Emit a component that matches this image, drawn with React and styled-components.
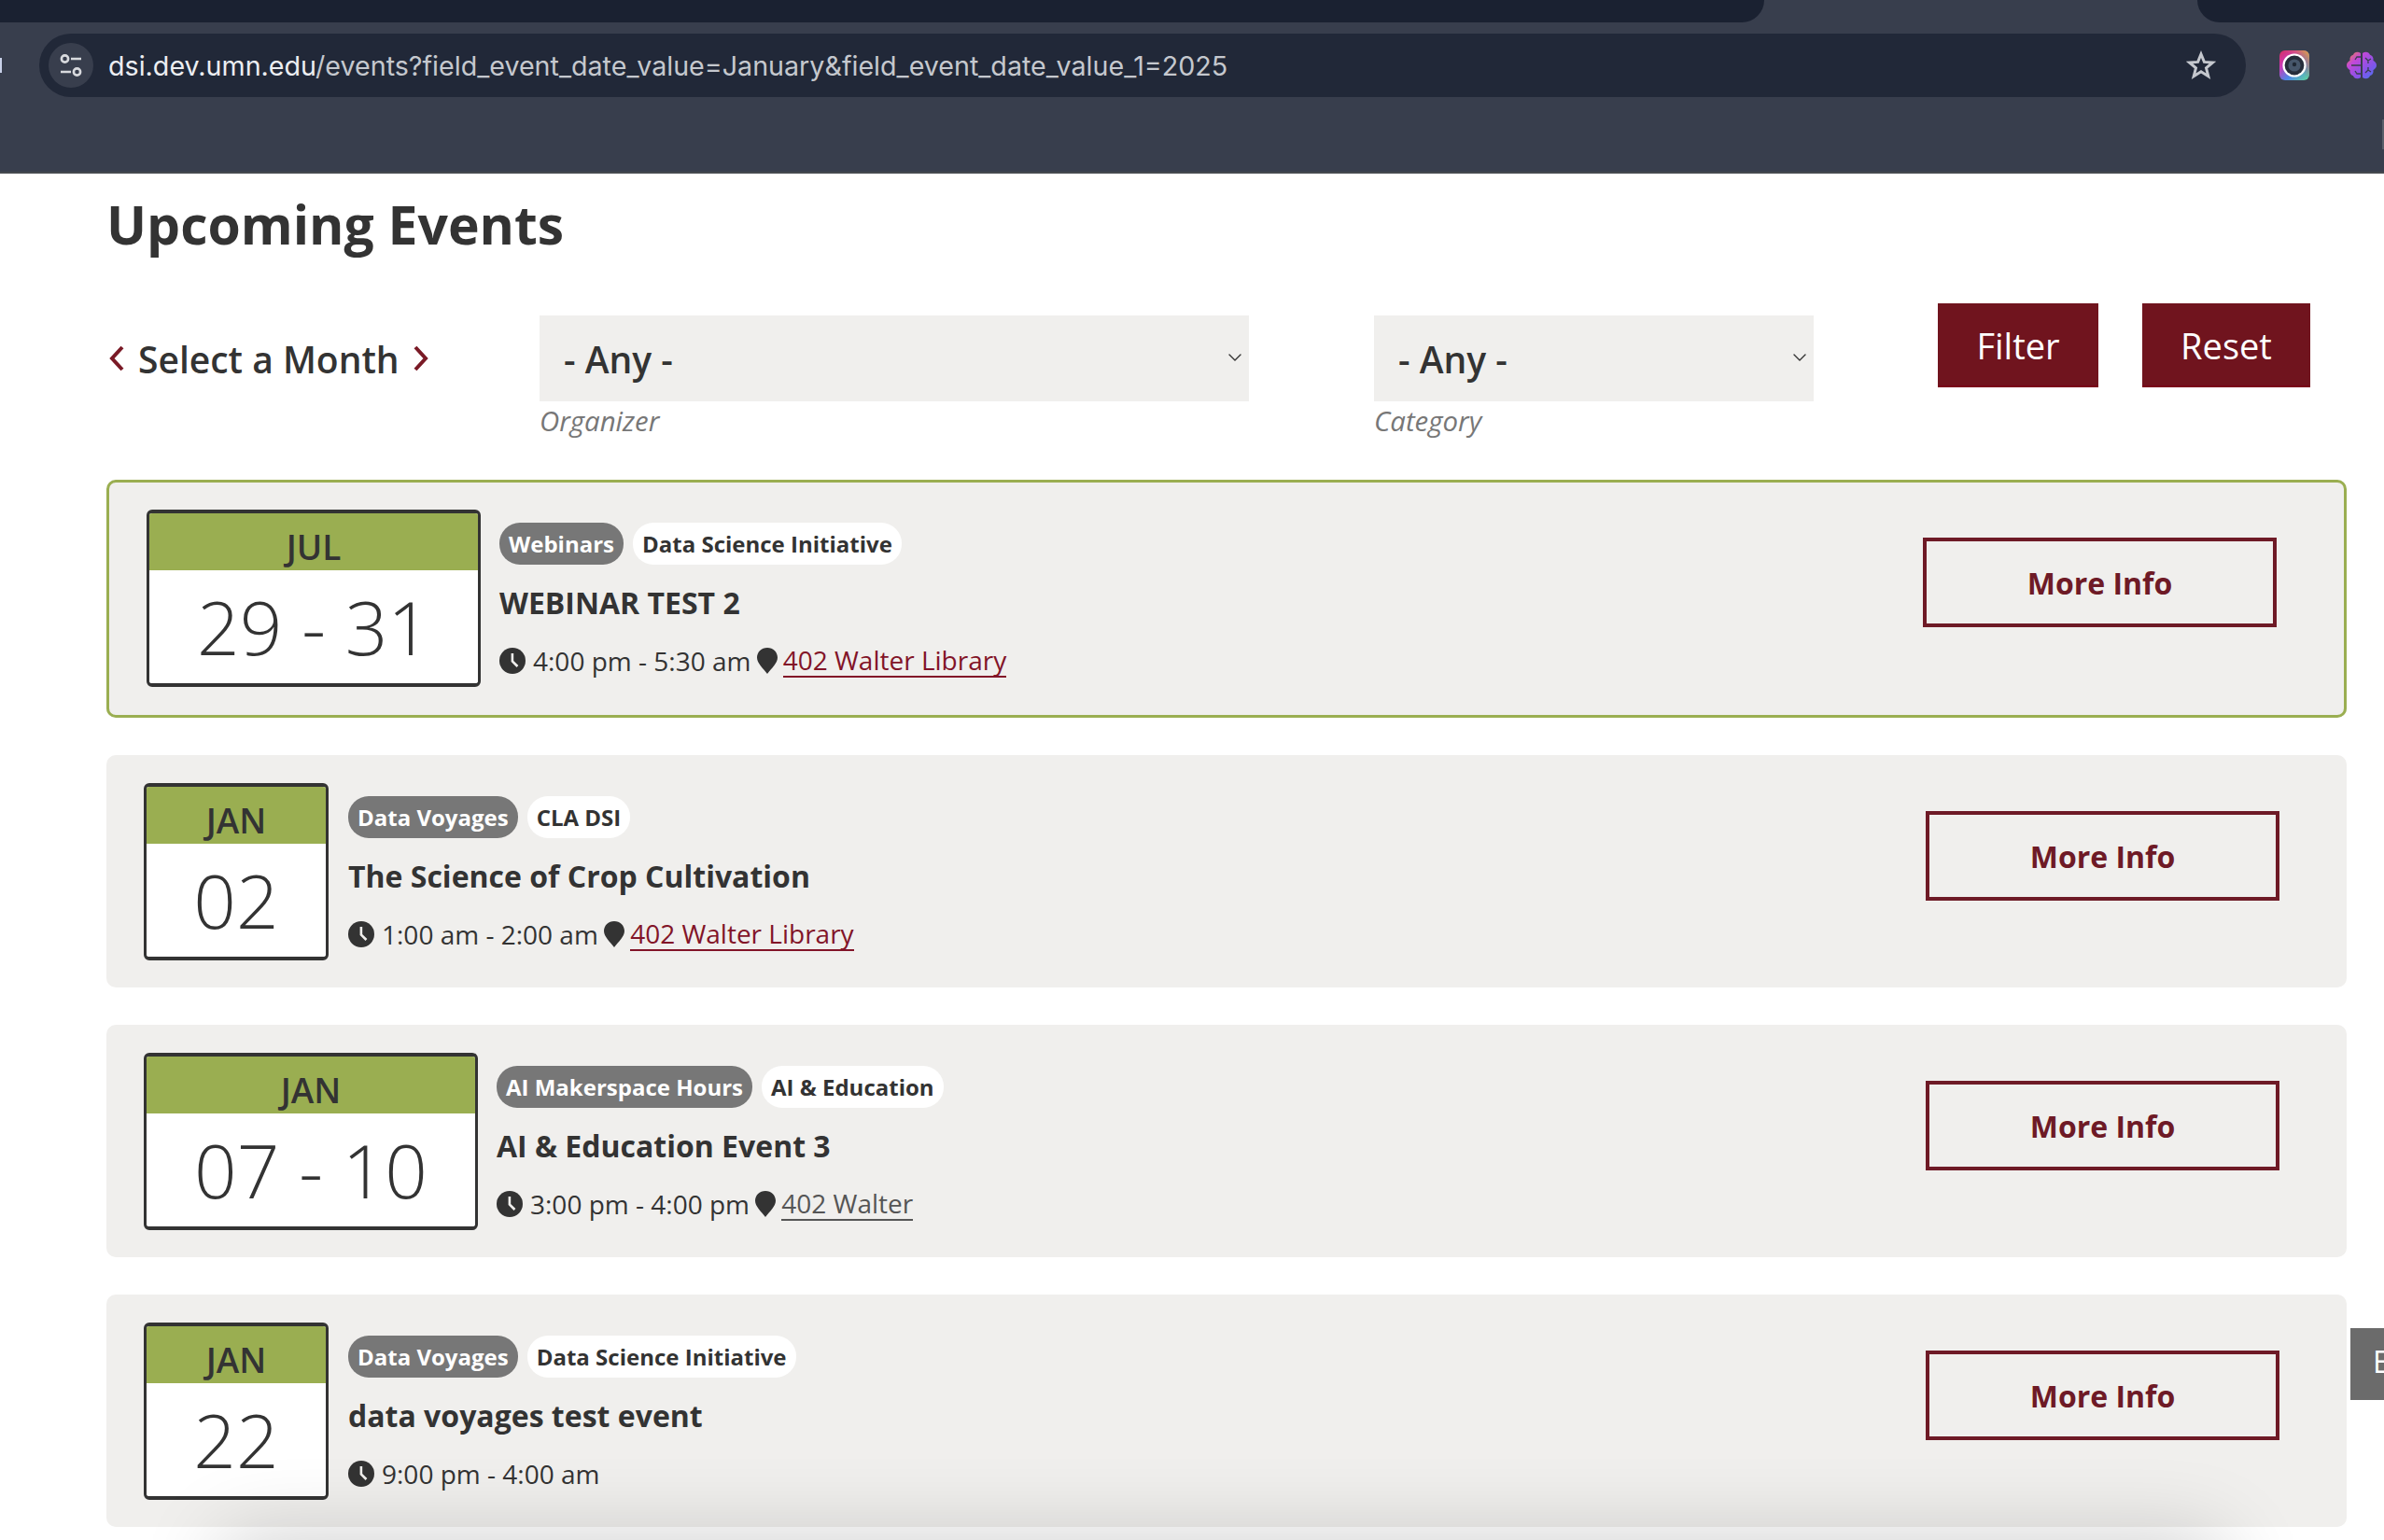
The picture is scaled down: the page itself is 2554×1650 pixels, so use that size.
import React from 'react';
import styled, { createGlobalStyle } from 'styled-components';
import { LuChevronDown } from 'react-icons/lu';

const GlobalStyle = createGlobalStyle`
  html, body {
    margin: 0;
    height: 100%;
    overflow: hidden;
    background: #fff;
  }
  * {
    box-sizing: border-box;
  }
`;

const Page = styled.div`
  position: relative;
  width: 2554px;
  height: 1650px;
  overflow: hidden;
  font-family: "Open Sans", sans-serif;
  color: #333;
`;

/* browser chrome */
const Chrome = styled.div`
  height: 186px;
  background: #383e4d;
  border-bottom: 2px solid #45494f;
`;

const TabStrip = styled.div`
  display: flex;
  justify-content: space-between;
  height: 24px;
`;

const LeftTabs = styled.div`
  width: 1890px;
  background: #1a2131;
  border-bottom-right-radius: 24px;
`;

const RightTabs = styled.div`
  width: 200px;
  background: #1a2131;
  border-bottom-left-radius: 24px;
`;

const ToolRow = styled.div`
  display: flex;
  align-items: center;
  height: 68px;
  margin-top: 12px;
`;

const ClippedButton = styled.div`
  width: 2px;
  height: 16px;
  margin-right: 40px;
  background: #c8d0e8;
`;

const AddressBar = styled.div`
  display: flex;
  align-items: center;
  width: 2364px;
  height: 68px;
  padding: 0 32px 0 10px;
  border-radius: 34px;
  background: #212838;
`;

const SiteButton = styled.div`
  display: flex;
  align-items: center;
  justify-content: center;
  width: 48px;
  height: 48px;
  margin-right: 16px;
  border-radius: 50%;
  background: #383e4d;
`;

const Url = styled.div`
  flex: 1;
  font-family: Inter, sans-serif;
  font-size: 28.65px;
  color: #c5c8ce;
  white-space: nowrap;
`;

const UrlHost = styled.span`
  color: #eceef2;
`;

const ExtensionSlot = styled.div`
  display: flex;
  margin-left: ${({ $left }) => $left}px;
`;

/* page content */
const Content = styled.main`
  padding: 19px 40px 0 114px;
`;

const Heading = styled.h1`
  margin: 0;
  font-size: 57px;
  line-height: 70px;
  font-weight: 700;
  color: #333;
`;

const FilterRow = styled.form`
  display: flex;
  align-items: flex-start;
  height: 239px;
  padding-top: 50px;
`;

const MonthPicker = styled.div`
  display: flex;
  align-items: center;
  gap: 14px;
  width: 464px;
  height: 92px;
  margin-top: 13px;
  padding-left: 2px;
  font-size: 39px;
  font-weight: 600;
  color: #333;
`;

const MonthArrow = styled.svg`
  width: 18px;
  height: 30px;
  fill: none;
  stroke: #7a1a26;
  stroke-width: 4;
`;

const Field = styled.div`
  width: ${({ $width }) => $width}px;
  margin-top: 13px;
  margin-right: ${({ $right }) => $right}px;
`;

const SelectWrap = styled.div`
  position: relative;
  height: 92px;
`;

const Select = styled.select`
  appearance: none;
  width: 100%;
  height: 100%;
  padding: 0 26px;
  border: 0;
  border-radius: 0;
  background: #f0efed;
  font-family: inherit;
  font-size: 39px;
  font-weight: 600;
  color: #333;
`;

const SelectChevron = styled(LuChevronDown)`
  position: absolute;
  top: 33px;
  right: 3px;
  width: 24px;
  height: 24px;
  color: #333;
  stroke-width: 1.4;
`;

const FieldLabel = styled.label`
  display: block;
  margin-top: 0;
  font-size: 29.4px;
  line-height: 42px;
  font-style: italic;
  color: #777;
`;

const SubmitButton = styled.button`
  width: ${({ $width }) => $width}px;
  height: 90px;
  margin-right: ${({ $right }) => $right}px;
  padding: 2px 0 0;
  border: 0;
  border-bottom: 2px solid #7a0019;
  background: #70141e;
  font-family: inherit;
  font-size: 38px;
  font-weight: 500;
  color: #fff;
`;

const EventList = styled.div`
  display: flex;
  flex-direction: column;
  gap: 40px;
`;

const EventCard = styled.article`
  display: flex;
  align-items: flex-start;
  justify-content: space-between;
  height: ${({ $current }) => ($current ? 255 : 249)}px;
  padding: ${({ $current }) => ($current ? '29px 72px 0 40px' : '30px 72px 0 40px')};
  border-radius: 10px;
  background: #f0efed;
  border: ${({ $current }) => ($current ? '3px solid #9aae51' : '0')};
`;

const EventMain = styled.div`
  display: flex;
  gap: ${({ $wide }) => ($wide ? 20 : 21)}px;
`;

const DateBox = styled.div`
  display: flex;
  flex-direction: column;
  width: ${({ $wide }) => ($wide ? 358 : 198)}px;
  height: 190px;
  overflow: hidden;
  border: 3px solid #333;
  border-top-width: 4px;
  border-bottom-width: 4px;
  border-radius: 6px;
  background: #fff;
`;

const DateMonth = styled.div`
  height: 61px;
  background: #9aae51;
  font-size: 37px;
  line-height: 72px;
  font-weight: 600;
  text-align: center;
  color: #333;
`;

const DateDay = styled.div`
  flex: 1;
  font-size: 80px;
  line-height: 120px;
  font-weight: 300;
  text-align: center;
  color: #333;
`;

const EventBody = styled.div`
  padding-top: 14px;
`;

const Tags = styled.div`
  display: flex;
  gap: 10px;
`;

const Tag = styled.span`
  height: 45px;
  padding: 0 10px;
  border-radius: 22px;
  font-size: 24px;
  line-height: 45px;
  font-weight: 700;
  background: ${({ $type }) => ($type ? '#777' : '#fff')};
  color: ${({ $type }) => ($type ? '#fff' : '#333')};
`;

const EventTitle = styled.h3`
  margin: 18px 0 0;
  font-size: 32px;
  line-height: 46px;
  font-weight: 700;
  color: #333;
`;

const EventMeta = styled.div`
  display: flex;
  align-items: center;
  height: 40px;
  margin-top: 19px;
  font-size: 28px;
  color: #333;
`;

const MetaIcon = styled.svg`
  flex: none;
  width: ${({ $width }) => $width}px;
  height: 28px;
  margin: 0 ${({ $gap }) => $gap}px 0 ${({ $lead }) => $lead}px;
  fill: #333;
`;

const Location = styled.a`
  margin-left: 6px;
  line-height: 34px;
  border-bottom: 2px solid ${({ $muted }) => ($muted ? '#555' : '#821428')};
  color: ${({ $muted }) => ($muted ? '#555' : '#821428')};
`;

const MoreInfo = styled.a`
  display: flex;
  align-items: center;
  justify-content: center;
  width: 379px;
  height: 96px;
  margin-top: 30px;
  border: 4px solid #6e1a26;
  font-size: 32px;
  font-weight: 700;
  color: #6e1a26;
`;

/* things lying over the page */
const SideTab = styled.div`
  position: absolute;
  top: 1423px;
  left: 2518px;
  width: 36px;
  height: 77px;
  padding-left: 24px;
  overflow: hidden;
  background: #6b6b6b;
  font-size: 32px;
  line-height: 72px;
  font-weight: 400;
  color: #fff;
`;

const WindowEdge = styled.div`
  position: absolute;
  top: 128px;
  left: 2552px;
  width: 2px;
  height: 32px;
  background: #5a5f6a;
`;

const DockShadow = styled.div`
  position: absolute;
  top: 1650px;
  left: 240px;
  width: 2140px;
  height: 200px;
  box-shadow: 0 0 90px rgba(0, 0, 0, 0.2);
`;

const ClockIcon = () => (
  <MetaIcon viewBox="0 0 28 28" $width={28} $gap={8} $lead={0}>
    <path d="M14 0a14 14 0 1 0 0 28a14 14 0 0 0 0-28z" />
    <path d="M12.6 6h2.6v8l5.2 5-1.9 1.9-5.9-5.8z" fill="#f0efed" />
  </MetaIcon>
);

const PinIcon = () => (
  <MetaIcon viewBox="0 0 22 28" $width={22} $gap={0} $lead={-1}>
    <path d="M11 0C4.8 0 0 4.6 0 10.6c0 6 6.4 11.6 11 17.4 4.6-5.8 11-11.4 11-17.4C22 4.6 17.2 0 11 0z" />
  </MetaIcon>
);

const Tune = () => (
  <svg width="26" height="26" viewBox="0 0 26 26" fill="none" stroke="#d8dade" strokeWidth="2.6">
    <circle cx="6.5" cy="6" r="3.6" />
    <path d="M13 6h11M2 20h11" />
    <circle cx="19.5" cy="20" r="3.6" />
  </svg>
);

const Star = () => (
  <svg width="32" height="32" viewBox="0 0 32 32" fill="none" stroke="#c5c8ce" strokeWidth="3" strokeLinejoin="miter">
    <polygon points="16,4 19.4,12.4 28.5,13 21.5,18.8 23.8,27.7 16,22.8 8.2,27.7 10.5,18.8 3.5,13 12.6,12.4" />
  </svg>
);

const CameraExtension = () => (
  <svg width="32" height="32" viewBox="0 0 32 32">
    <defs>
      <linearGradient id="cam" x1="0" y1="0" x2="1" y2="1">
        <stop offset="0" stopColor="#d8305f" />
        <stop offset="0.3" stopColor="#c93ab8" />
        <stop offset="0.6" stopColor="#4f86e8" />
        <stop offset="1" stopColor="#5fdc9a" />
      </linearGradient>
      <linearGradient id="camTop" x1="0" y1="1" x2="1" y2="0">
        <stop offset="0.5" stopColor="#d8305f" stopOpacity="0" />
        <stop offset="1" stopColor="#e8b03a" />
      </linearGradient>
    </defs>
    <rect width="32" height="32" rx="6" fill="url(#cam)" />
    <rect width="32" height="32" rx="6" fill="url(#camTop)" />
    <circle cx="16" cy="16" r="12.6" fill="#fff" />
    <circle cx="16" cy="16" r="10.4" fill="#262d3a" />
    <circle cx="16" cy="16" r="6.6" fill="#46566a" />
    <circle cx="16" cy="15" r="2.2" fill="#1f2733" />
  </svg>
);

const BrainExtension = () => (
  <svg width="32" height="30" viewBox="0 0 32 30">
    <defs>
      <linearGradient id="brain" x1="0" y1="0" x2="1" y2="1">
        <stop offset="0" stopColor="#f08a3c" />
        <stop offset="0.3" stopColor="#c348d8" />
        <stop offset="0.7" stopColor="#7f55ea" />
        <stop offset="1" stopColor="#3f7cf0" />
      </linearGradient>
    </defs>
    <path
      d="M15 2c-3-2.4-7-1.4-8 1.8C4 4.6 3 7.4 3.6 9.8 1 11.4 0 13.2 0 15c0 2 1.2 3.6 3.6 5.2-.6 2.6.4 5.2 3.4 6 1 3.2 5 4 8 1.8zM17 2c3-2.4 7-1.4 8 1.8 3 .8 4 3.6 3.4 6 2.6 1.6 3.6 3.4 3.6 5.2 0 2-1.2 3.6-3.6 5.2.6 2.6-.4 5.2-3.4 6-1 3.2-5 4-8 1.8z"
      fill="url(#brain)"
    />
    <path
      d="M15 15H5M15 6h-4l-2 3M15 24h-4l-2-3M20 7l3 3 3-2M23 10v3M20 23l3-3 3 2M23 20v-3"
      fill="none"
      stroke="#383e4d"
      strokeWidth="1.3"
    />
  </svg>
);

const events = [
  {
    month: 'JUL', day: '29 - 31', wide: true, current: true, type: 'Webinars', org: 'Data Science Initiative',
    title: 'WEBINAR TEST 2', time: '4:00 pm - 5:30 am', place: '402 Walter Library',
  },
  {
    month: 'JAN', day: '02', type: 'Data Voyages', org: 'CLA DSI',
    title: 'The Science of Crop Cultivation', time: '1:00 am - 2:00 am', place: '402 Walter Library',
  },
  {
    month: 'JAN', day: '07 - 10', wide: true, type: 'AI Makerspace Hours', org: 'AI & Education',
    title: 'AI & Education Event 3', time: '3:00 pm - 4:00 pm', place: '402 Walter', muted: true,
  },
  {
    month: 'JAN', day: '22', type: 'Data Voyages', org: 'Data Science Initiative',
    title: 'data voyages test event', time: '9:00 pm - 4:00 am',
  },
];

const Event = ({ event }) => (
  <EventCard $current={event.current}>
    <EventMain $wide={event.wide}>
      <DateBox $wide={event.wide}>
        <DateMonth>{event.month}</DateMonth>
        <DateDay>{event.day}</DateDay>
      </DateBox>
      <EventBody>
        <Tags>
          <Tag $type>{event.type}</Tag>
          <Tag>{event.org}</Tag>
        </Tags>
        <EventTitle>{event.title}</EventTitle>
        <EventMeta>
          <ClockIcon />
          {event.time}
          {event.place && (
            <>
              <span>&nbsp;</span>
              <PinIcon />
              <Location $muted={event.muted}>{event.place}</Location>
            </>
          )}
        </EventMeta>
      </EventBody>
    </EventMain>
    <MoreInfo>More Info</MoreInfo>
  </EventCard>
);

const App = () => (
  <Page>
    <GlobalStyle />
    <Chrome>
      <TabStrip>
        <LeftTabs />
        <RightTabs />
      </TabStrip>
      <ToolRow>
        <ClippedButton />
        <AddressBar>
          <SiteButton><Tune /></SiteButton>
          <Url>
            <UrlHost>dsi.dev.umn.edu</UrlHost>
            /events?field_event_date_value=January&amp;field_event_date_value_1=2025
          </Url>
          <Star />
        </AddressBar>
        <ExtensionSlot $left={36}><CameraExtension /></ExtensionSlot>
        <ExtensionSlot $left={40}><BrainExtension /></ExtensionSlot>
      </ToolRow>
    </Chrome>
    <Content>
      <Heading>Upcoming Events</Heading>
      <FilterRow>
        <MonthPicker>
          <MonthArrow viewBox="0 0 18 30"><path d="M15 3 4 15l11 12" /></MonthArrow>
          Select a Month
          <MonthArrow viewBox="0 0 18 30"><path d="M3 3l11 12L3 27" /></MonthArrow>
        </MonthPicker>
        <Field $width={760} $right={134}>
          <SelectWrap>
            <Select defaultValue="any"><option value="any">- Any -</option></Select>
            <SelectChevron />
          </SelectWrap>
          <FieldLabel>Organizer</FieldLabel>
        </Field>
        <Field $width={471} $right={133}>
          <SelectWrap>
            <Select defaultValue="any"><option value="any">- Any -</option></Select>
            <SelectChevron />
          </SelectWrap>
          <FieldLabel>Category</FieldLabel>
        </Field>
        <SubmitButton type="button" $width={172} $right={47}>Filter</SubmitButton>
        <SubmitButton type="button" $width={180} $right={0}>Reset</SubmitButton>
      </FilterRow>
      <EventList>
        {events.map((event) => (
          <Event key={event.title} event={event} />
        ))}
      </EventList>
    </Content>
    <WindowEdge />
    <SideTab>E</SideTab>
    <DockShadow />
  </Page>
);

export default App;
